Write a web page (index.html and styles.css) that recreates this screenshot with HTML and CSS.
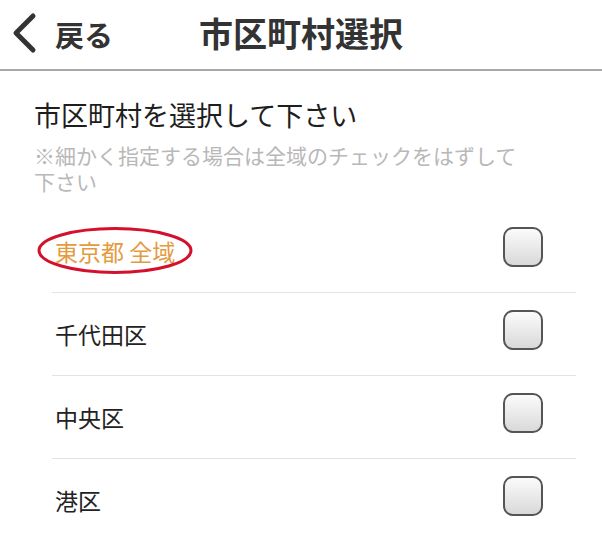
FILE: index.html
```html
<!DOCTYPE html>
<html lang="ja">
<head>
<meta charset="utf-8">
<title>市区町村選択</title>
<link rel="stylesheet" href="styles.css">
</head>
<body>
<header class="topbar">
  <a class="back" href="#">
    <svg class="chevron" width="26" height="44" viewBox="0 0 26 44" aria-hidden="true">
      <polyline points="22,4 5,21 22,38" fill="none" stroke="#333" stroke-width="5" stroke-linecap="round" stroke-linejoin="round"/>
    </svg>
    <span class="back-label">戻る</span>
  </a>
  <h1 class="title">市区町村選択</h1>
  <span class="spacer"></span>
</header>
<main class="content">
  <h2 class="heading">市区町村を選択して下さい</h2>
  <p class="note">※細かく指定する場合は全域のチェックをはずして下さい</p>
  <ul class="list">
    <li class="row">
      <span class="label label-all">東京都 全域
        <svg class="ring" width="158" height="49" viewBox="0 0 158 49" aria-hidden="true">
          <ellipse cx="79" cy="24.5" rx="76" ry="22" fill="none" stroke="#d4102c" stroke-width="3"/>
        </svg>
      </span>
      <span class="check"></span>
    </li>
    <li class="row">
      <span class="label">千代田区</span>
      <span class="check"></span>
    </li>
    <li class="row">
      <span class="label">中央区</span>
      <span class="check"></span>
    </li>
    <li class="row">
      <span class="label">港区</span>
      <span class="check"></span>
    </li>
  </ul>
</main>
</body>
</html>
```

FILE: styles.css
```css
* {
  box-sizing: border-box;
}

html, body {
  margin: 0;
  padding: 0;
  background: #fff;
}

body {
  font-family: "Noto Sans CJK JP", "Noto Sans", sans-serif;
  color: #222;
  width: 602px;
  height: 533px;
  overflow: hidden;
}

.topbar {
  height: 71px;
  border-bottom: 2px solid #a9a9a9;
  display: grid;
  grid-template-columns: 1fr auto 1fr;
  align-items: center;
}

.back {
  display: flex;
  align-items: center;
  text-decoration: none;
  color: #333;
  padding-left: 11px;
  padding-bottom: 1px;
}

.chevron {
  display: block;
}

.back-label {
  font-size: 29px;
  font-weight: 700;
  margin-left: 18px;
  line-height: 1;
}

.title {
  margin: 0;
  font-size: 34px;
  font-weight: 700;
  color: #333;
  line-height: 1;
  padding-bottom: 3px;
}

.content {
  padding-left: 34px;
}

.heading {
  margin: 27px 0 0;
  font-size: 27px;
  font-weight: 400;
  line-height: 34px;
  color: #1e1e1e;
}

.note {
  margin: 10px 0 0;
  max-width: 492px;
  font-size: 21px;
  line-height: 26px;
  color: #b8b8b8;
}

.list {
  list-style: none;
  margin: 16px 0 0 18px;
  padding: 0;
  width: 524px;
}

.row {
  height: 83px;
  border-bottom: 1px solid #e2e2e2;
  display: flex;
  align-items: center;
  justify-content: space-between;
}

.label {
  position: relative;
  padding-left: 3px;
  font-size: 23px;
  line-height: 28px;
  color: #222;
}

.label-all {
  color: #e49a3e;
}

.ring {
  position: absolute;
  left: -16px;
  top: -11px;
}

.check {
  width: 40px;
  height: 40px;
  border: 2px solid #555;
  border-radius: 10px;
  background: linear-gradient(#fbfbfb, #d9d9d9);
  margin-right: 33px;
  margin-bottom: 9px;
}
```
